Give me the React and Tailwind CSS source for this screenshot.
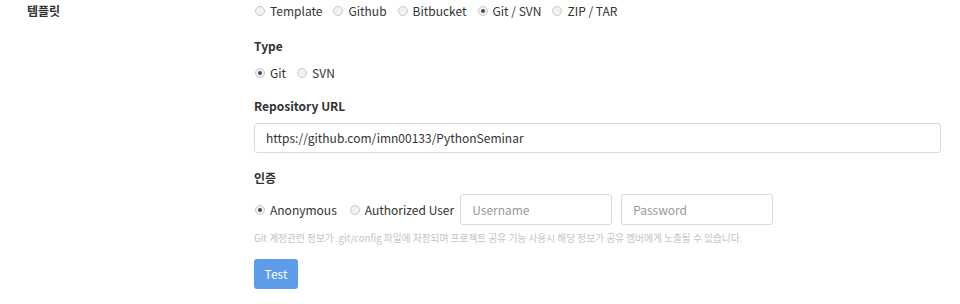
import React from 'react';

const Radio = ({ label, checked }) => (
  <label className="flex items-center gap-[5px] h-[16px]">
    <span className="w-[10px] h-[10px] rounded-full border border-[#c9c9c9] bg-[#f1f1f1] flex items-center justify-center">
      {checked && <span className="w-[4px] h-[4px] rounded-full bg-[#4a4a4a]" />}
    </span>
    <span className="text-[12px] text-[#333]">{label}</span>
  </label>
);

const FieldLabel = ({ children, className = '' }) => (
  <div className={`h-[18px] leading-[18px] text-[12px] font-bold text-[#333] ${className}`}>{children}</div>
);

const App = () => {
  return (
    <div
      className="w-[960px] h-[304px] bg-white flex pt-[3px]"
      style={{ fontFamily: '"Noto Sans CJK KR", "Noto Sans", sans-serif' }}
    >
      <div className="w-[254px] pl-[27px] shrink-0">
        <div className="h-[16px] leading-[16px] text-[12px] font-bold text-[#333]">템플릿</div>
      </div>

      <div className="w-[687px]">
        <div className="flex gap-[11px] ml-[1px]">
          <Radio label="Template" />
          <Radio label="Github" />
          <Radio label="Bitbucket" />
          <Radio label="Git / SVN" checked />
          <Radio label="ZIP / TAR" />
        </div>

        <FieldLabel className="mt-[18px]">Type</FieldLabel>
        <div className="flex gap-[11px] ml-[1px] mt-[10px]">
          <Radio label="Git" checked />
          <Radio label="SVN" />
        </div>

        <FieldLabel className="mt-[16px]">Repository URL</FieldLabel>
        <div className="mt-[8px] h-[30px] border border-[#d9d9d9] rounded-[3px] flex items-center px-[11px] text-[12px] text-[#333]">
          https://github.com/imn00133/PythonSeminar
        </div>

        <FieldLabel className="mt-[16px]">인증</FieldLabel>
        <div className="mt-[7px] flex items-center h-[31px] ml-[1px]">
          <Radio label="Anonymous" checked />
          <div className="ml-[13px]">
            <Radio label="Authorized User" />
          </div>
          <div className="ml-[6px] w-[152px] h-[31px] border border-[#d9d9d9] rounded-[3px] flex items-center px-[11px] text-[12px] text-[#999]">
            Username
          </div>
          <div className="ml-[9px] w-[152px] h-[31px] border border-[#d9d9d9] rounded-[3px] flex items-center px-[11px] text-[12px] text-[#999]">
            Password
          </div>
        </div>

        <div className="mt-[6px] h-[14px] leading-[14px] text-[9.7px] text-[#c4c4c4]">
          Git 계정관련 정보가 .git/config 파일에 저장되며 프로젝트 공유 기능 사용시 해당 정보가 공유 멤버에게 노출될 수 있습니다.
        </div>

        <button className="mt-[14px] w-[44px] h-[30px] rounded-[3px] bg-[#5d9ce8] text-white text-[12px]">
          Test
        </button>
      </div>
    </div>
  );
};

export default App;
